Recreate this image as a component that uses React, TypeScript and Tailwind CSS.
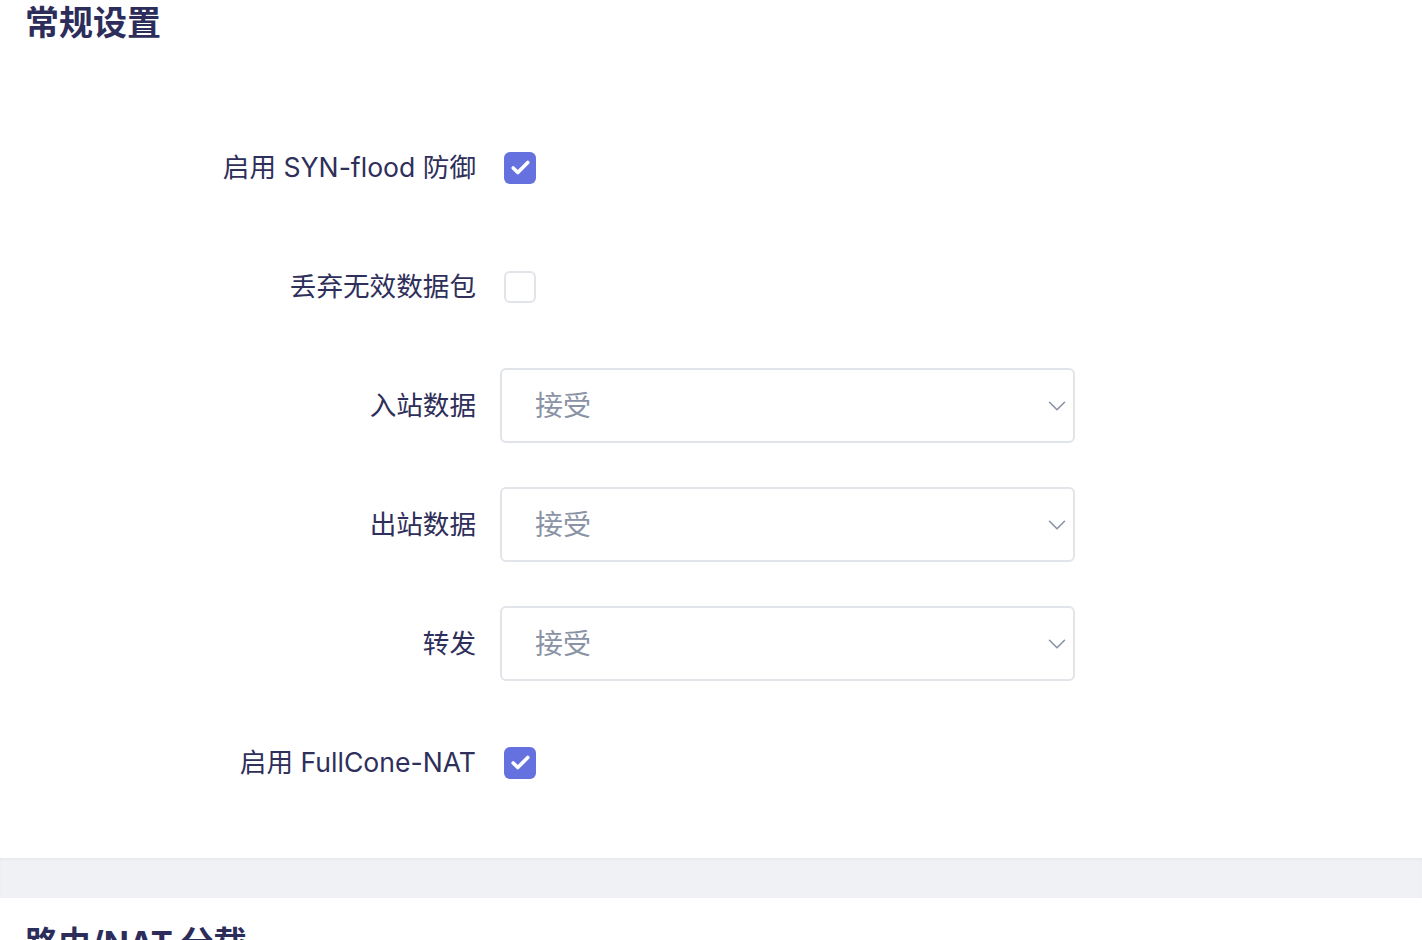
import { ChevronDown } from "lucide-react";

const font = { fontFamily: '"Inter", "Noto Sans CJK SC", sans-serif' };

const Check = ({ on }: { on: boolean }) => (
  <div
    className={
      on
        ? "ml-1 flex h-8 w-8 items-center justify-center rounded-[6px] bg-[#6471de]"
        : "ml-1 h-8 w-8 rounded-[6px] border-2 border-[#e1e4e9] bg-white"
    }
  >
    {on && (
      <svg width="27" height="27" viewBox="0 0 20 20">
        <path
          d="M4.6 10.4l3.4 3.3 7.4-7.4"
          fill="none"
          stroke="white"
          strokeWidth="2.7"
          strokeLinecap="round"
          strokeLinejoin="round"
        />
      </svg>
    )}
  </div>
);

const Select = ({ value }: { value: string }) => (
  <div className="flex h-[75px] w-[575px] items-center justify-between rounded-[6px] border-2 border-[#e1e4e9] bg-white pl-[33px] pr-[1px]">
    <span className="text-[28px] text-[#8a93a5]">{value}</span>
    <ChevronDown size={30} strokeWidth={1.3} className="text-[#8a93a5]" />
  </div>
);

const Row = ({ label, children }: { label: string; children: React.ReactNode }) => (
  <div className="flex h-[119px] items-center">
    <div className="w-[476px] text-right text-[26.6px] text-[#2f2f5b]">{label}</div>
    <div className="ml-6 flex items-center">{children}</div>
  </div>
);

export default function App() {
  return (
    <div className="min-h-screen bg-white" style={font}>
      <div className="pb-[36px]">
        <h2 className="mt-[4px] pl-[25px] text-[34px] font-bold leading-[38px] text-[#2d2d5b]">
          常规设置
        </h2>
        <div className="mt-[66px]">
          <Row label="启用 SYN-flood 防御">
            <Check on />
          </Row>
          <Row label="丢弃无效数据包">
            <Check on={false} />
          </Row>
          <Row label="入站数据">
            <Select value="接受" />
          </Row>
          <Row label="出站数据">
            <Select value="接受" />
          </Row>
          <Row label="转发">
            <Select value="接受" />
          </Row>
          <Row label="启用 FullCone-NAT">
            <Check on />
          </Row>
        </div>
      </div>
      <div className="h-[40px] bg-[#f0f1f4] shadow-[inset_0_2px_3px_rgba(0,0,0,0.03)]" />
      <div className="pt-[26px]">
        <h2 className="pl-[25px] text-[33px] font-bold leading-[38px] text-[#2d2d5b]">
          路由/NAT 分载
        </h2>
      </div>
    </div>
  );
}
